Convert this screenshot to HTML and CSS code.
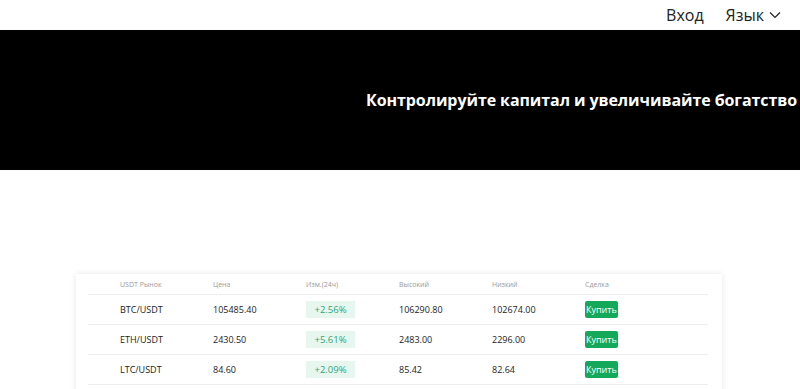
FILE: index.html
```html
<!DOCTYPE html>
<html>
<head>
    <title>Рынок</title>
    <link rel="stylesheet" href="styles.css">
</head>
<body>

<div class="topbar">
    <a class="nav-link" href="#">Вход</a>
    <a class="nav-link lang" href="#">Язык
        <svg width="12" height="8" viewBox="0 0 12 8"><path d="M1 1.5 L6 6.5 L11 1.5" fill="none" stroke="#222" stroke-width="1.2"/></svg>
    </a>
</div>

<div class="hero">
    <h1>Контролируйте капитал и увеличивайте богатство</h1>
</div>

<div class="market">
    <div class="market-card">
        <div class="row head">
            <span>USDT Рынок</span>
            <span>Цена</span>
            <span>Изм.(24ч)</span>
            <span>Высокий</span>
            <span>Низкий</span>
            <span>Сделка</span>
        </div>
        <div class="row">
            <span>BTC/USDT</span>
            <span>105485.40</span>
            <span><em class="change">+2.56%</em></span>
            <span>106290.80</span>
            <span>102674.00</span>
            <span><button class="buy">Купить</button></span>
        </div>
        <div class="row">
            <span>ETH/USDT</span>
            <span>2430.50</span>
            <span><em class="change">+5.61%</em></span>
            <span>2483.00</span>
            <span>2296.00</span>
            <span><button class="buy">Купить</button></span>
        </div>
        <div class="row">
            <span>LTC/USDT</span>
            <span>84.60</span>
            <span><em class="change">+2.09%</em></span>
            <span>85.42</span>
            <span>82.64</span>
            <span><button class="buy">Купить</button></span>
        </div>
    </div>
</div>

</body>
</html>
```

FILE: styles.css
```css
body {
    margin: 0;
    background: #fff;
    font-family: 'Open Sans', 'Noto Sans', sans-serif;
    color: #222;
    overflow: hidden;
}
.topbar {
    height: 30px;
    display: flex;
    justify-content: flex-end;
    align-items: center;
    gap: 22px;
    padding-right: 19px;
}
.nav-link {
    font-size: 16px;
    color: #222;
    text-decoration: none;
    display: flex;
    align-items: center;
    gap: 5px;
}
.hero {
    height: 140px;
    background: #000;
    display: flex;
    align-items: center;
    justify-content: flex-end;
    padding-right: 3px;
}
.hero h1 {
    margin: 0;
    color: #fff;
    font-size: 16px;
    font-weight: 700;
    letter-spacing: -0.08px;
}
.market {
    padding: 104px 78px 0 76px;
}
.market-card {
    background: #fff;
    box-shadow: 0 0 6px rgba(0,0,0,0.1);
    padding: 0 14px 0 12px;
    height: 200px;
}
.row {
    display: grid;
    grid-template-columns: 93px 93px 93px 93px 93px 93px;
    padding-left: 32px;
    height: 29px;
    align-items: center;
    border-bottom: 1px solid #eee;
    font-size: 9px;
}
.row.head {
    height: 20px;
    font-size: 7px;
    color: #999;
}
.change {
    font-style: normal;
    display: inline-block;
    width: 49px;
    height: 17px;
    line-height: 17px;
    text-align: center;
    background: #e8f6f0;
    color: #2aa878;
    font-size: 9.5px;
}
.buy {
    border: none;
    background: #13a85a;
    color: #fff;
    font-family: inherit;
    font-size: 9px;
    height: 17px;
    padding: 0 1px;
    border-radius: 2px;
}
```
